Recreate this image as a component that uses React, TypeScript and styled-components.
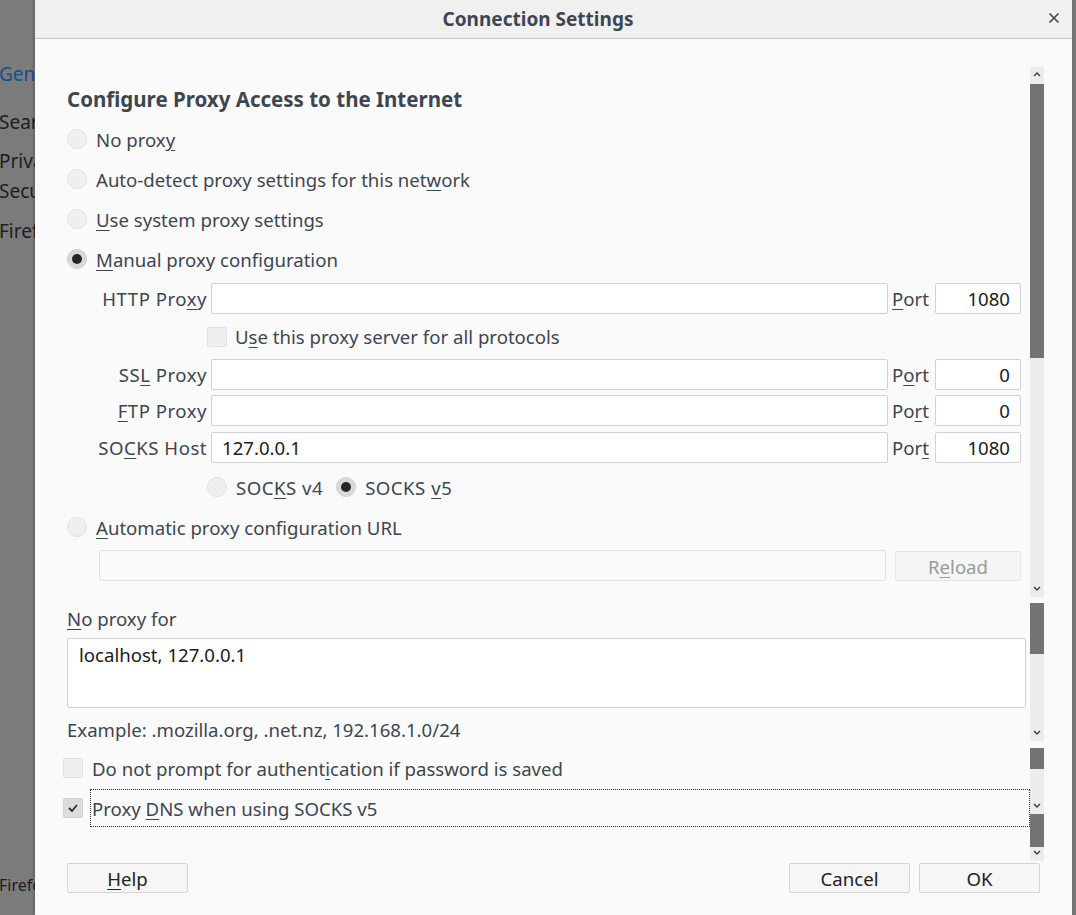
import React from "react";
import styled, { createGlobalStyle } from "styled-components";

const GlobalStyle = createGlobalStyle`
  html, body {
    margin: 0;
    padding: 0;
    overflow: hidden;
  }
  body {
    font-family: "Noto Sans", "Open Sans", sans-serif;
    font-size: 18.6px;
    color: #3d4650;
  }
  u {
    text-decoration-thickness: 1px;
    text-underline-offset: 3px;
  }
`;

const TEXT = "#3d4650";

type Segment = { kind: "track" | "thumb" | "gap"; height: number; arrow?: "up" | "down" };

const scrollSegments: Segment[] = [
  { kind: "track", height: 17, arrow: "up" },
  { kind: "thumb", height: 274 },
  { kind: "track", height: 239, arrow: "down" },
  { kind: "gap", height: 4 },
  { kind: "thumb", height: 51 },
  { kind: "track", height: 87, arrow: "down" },
  { kind: "gap", height: 7 },
  { kind: "thumb", height: 21 },
  { kind: "track", height: 45, arrow: "down" },
  { kind: "thumb", height: 33 },
  { kind: "track", height: 14, arrow: "down" },
];

const Chevron = ({ dir }: { dir: "up" | "down" }) => (
  <svg width="8" height="5" viewBox="0 0 8 5">
    <polyline
      points={dir === "up" ? "1,4 4,1 7,4" : "1,1 4,4 7,1"}
      fill="none"
      stroke="#3a3a3a"
      strokeWidth="1.4"
    />
  </svg>
);

const CloseIcon = () => (
  <svg width="12" height="12" viewBox="0 0 12 12">
    <path d="M1.5 1.5 L10.5 10.5 M10.5 1.5 L1.5 10.5" stroke="#3d4650" strokeWidth="1.6" />
  </svg>
);

const CheckIcon = () => (
  <svg width="12" height="10" viewBox="0 0 12 10">
    <polyline points="2,5 5,8 10,2" fill="none" stroke="#2a2a2a" strokeWidth="1.8" />
  </svg>
);

const Radio = ({ checked }: { checked?: boolean }) => (
  <RadioCircle $checked={checked}>{checked && <RadioDot />}</RadioCircle>
);

const Check = ({ checked }: { checked?: boolean }) => (
  <CheckBox $checked={checked}>{checked && <CheckIcon />}</CheckBox>
);

const ProxyRow = ({
  label,
  value,
  port,
  portLabel,
}: {
  label: React.ReactNode;
  value?: string;
  port: string;
  portLabel: React.ReactNode;
}) => (
  <GridRow>
    <FieldLabel>
      <span>{label}</span>
    </FieldLabel>
    <TextInput>{value}</TextInput>
    <PortLabel>
      <span>{portLabel}</span>
    </PortLabel>
    <PortInput>{port}</PortInput>
  </GridRow>
);

export default function App() {
  return (
    <Page>
      <GlobalStyle />
      <Backdrop>
        <NavItem $active $top={62}>General</NavItem>
        <NavItem $top={24}>Search</NavItem>
        <NavItem $top={15}>Privacy &amp;</NavItem>
        <NavItem $top={6}>Security</NavItem>
        <NavItem $top={16}>Firefox Account</NavItem>
        <NavFooter>Firefox Support</NavFooter>
      </Backdrop>

      <Dialog>
        <TitleBar>
          <Title>Connection Settings</Title>
          <CloseButton>
            <CloseIcon />
          </CloseButton>
        </TitleBar>

        <Body>
          <Content>
            <Heading>Configure Proxy Access to the Internet</Heading>

            <OptionRow $height={40}>
              <Radio />
              <span>No prox<u>y</u></span>
            </OptionRow>
            <OptionRow $height={40}>
              <Radio />
              <span>Auto-detect proxy settings for this net<u>w</u>ork</span>
            </OptionRow>
            <OptionRow $height={40}>
              <Radio />
              <span><u>U</u>se system proxy settings</span>
            </OptionRow>
            <OptionRow $height={40}>
              <Radio checked />
              <span><u>M</u>anual proxy configuration</span>
            </OptionRow>

            <ManualGrid>
              <ProxyRow
                label={<>HTTP Pro<u>x</u>y</>}
                portLabel={<><u>P</u>ort</>}
                port="1080"
              />
              <AllProtocolsRow>
                <Check />
                <span>U<u>s</u>e this proxy server for all protocols</span>
              </AllProtocolsRow>
              <ProxyRow
                label={<>SS<u>L</u> Proxy</>}
                portLabel={<>P<u>o</u>rt</>}
                port="0"
              />
              <Spacer $h={5} />
              <ProxyRow
                label={<><u>F</u>TP Proxy</>}
                portLabel={<>Po<u>r</u>t</>}
                port="0"
              />
              <Spacer $h={6} />
              <ProxyRow
                label={<>SO<u>C</u>KS Host</>}
                value="127.0.0.1"
                portLabel={<>Por<u>t</u></>}
                port="1080"
              />
              <SocksRow>
                <Radio />
                <SocksLabel>SOC<u>K</u>S v4</SocksLabel>
                <Radio checked />
                <SocksLabel>SOCKS <u>v</u>5</SocksLabel>
              </SocksRow>
            </ManualGrid>

            <OptionRow $height={32}>
              <Radio />
              <span><u>A</u>utomatic proxy configuration URL</span>
            </OptionRow>
            <UrlRow>
              <UrlInput />
              <ReloadButton>
                <span>R<u>e</u>load</span>
              </ReloadButton>
            </UrlRow>

            <SectionLabel>
              <u>N</u>o proxy for
            </SectionLabel>
            <TextArea>localhost, 127.0.0.1</TextArea>
            <Hint>Example: .mozilla.org, .net.nz, 192.168.1.0/24</Hint>

            <CheckRow $height={40} $top={6}>
              <Check />
              <CheckText>
                <span>Do not prompt for authent<u>i</u>cation if password is saved</span>
              </CheckText>
            </CheckRow>
            <CheckRow $height={38} $top={1}>
              <Check checked />
              <CheckText $focused>
                <span>Proxy <u>D</u>NS when using SOCKS v5</span>
              </CheckText>
            </CheckRow>
          </Content>

          <ScrollColumn>
            {scrollSegments.map((s, i) => (
              <ScrollPiece key={i} $kind={s.kind} $arrow={s.arrow} style={{ height: s.height }}>
                {s.arrow && <Chevron dir={s.arrow} />}
              </ScrollPiece>
            ))}
          </ScrollColumn>
        </Body>

        <Footer>
          <DialogButton>
            <span><u>H</u>elp</span>
          </DialogButton>
          <FooterRight>
            <DialogButton>Cancel</DialogButton>
            <DialogButton>OK</DialogButton>
          </FooterRight>
        </Footer>

        <Grip>
          <svg width="10" height="10" viewBox="0 0 10 10">
            <path d="M9 3 L3 9 M9 6 L6 9" stroke="#b8b8b8" strokeWidth="1" />
          </svg>
        </Grip>
      </Dialog>
      <RightEdge />
    </Page>
  );
}

const Page = styled.div`
  display: flex;
  width: 1076px;
  height: 915px;
  background: #7b7b7b;
`;

const Backdrop = styled.div`
  width: 35px;
  flex-shrink: 0;
  overflow: hidden;
  display: flex;
  flex-direction: column;
  white-space: nowrap;
  color: #1d1d1d;
  font-size: 19px;
  line-height: 24px;
`;

const NavItem = styled.div<{ $active?: boolean; $top: number }>`
  margin-top: ${(p) => p.$top}px;
  margin-left: -1px;
  color: ${(p) => (p.$active ? "#114f93" : "#1d1d1d")};
`;

const NavFooter = styled.div`
  margin-top: auto;
  margin-bottom: 18px;
  font-size: 16px;
  margin-left: -1px;
`;

const Dialog = styled.div`
  position: relative;
  flex: 1;
  display: flex;
  flex-direction: column;
  background: #fafafa;
  box-shadow: -1px 0 3px rgba(0, 0, 0, 0.25);
`;

const RightEdge = styled.div`
  width: 4px;
  flex-shrink: 0;
  background: #777;
`;

const TitleBar = styled.div`
  height: 39px;
  box-sizing: border-box;
  flex-shrink: 0;
  display: flex;
  align-items: center;
  justify-content: center;
  padding-right: 31px;
  background: #f0f0f0;
  border-bottom: 1px solid #c6c6c6;
  position: relative;
`;

const Title = styled.div`
  font-weight: bold;
  font-size: 19px;
  color: ${TEXT};
`;

const CloseButton = styled.div`
  position: absolute;
  right: 10px;
  top: 10px;
  width: 16px;
  height: 16px;
  display: flex;
  align-items: center;
  justify-content: center;
`;

const Body = styled.div`
  flex: 1;
  display: flex;
  min-height: 0;
  padding-right: 28px;
`;

const Content = styled.div`
  flex: 1;
  display: flex;
  flex-direction: column;
  padding: 45px 0 0 32px;
  min-width: 0;
`;

const Heading = styled.div`
  height: 30px;
  line-height: 30px;
  margin-bottom: 5px;
  font-size: 20.5px;
  font-weight: bold;
  color: ${TEXT};
`;

const OptionRow = styled.div<{ $height: number }>`
  height: ${(p) => p.$height}px;
  display: flex;
  align-items: center;
  gap: 9px;
  flex-shrink: 0;
  white-space: nowrap;
`;

const RadioCircle = styled.div<{ $checked?: boolean }>`
  width: 20px;
  height: 20px;
  box-sizing: border-box;
  border-radius: 50%;
  flex-shrink: 0;
  background: ${(p) => (p.$checked ? "#d9d9d9" : "#efefef")};
  border: 1px solid ${(p) => (p.$checked ? "#d0d0d0" : "#e0e0e0")};
  display: flex;
  align-items: center;
  justify-content: center;
`;

const RadioDot = styled.div`
  width: 10px;
  height: 10px;
  border-radius: 50%;
  background: #262626;
`;

const CheckBox = styled.div<{ $checked?: boolean }>`
  width: 20px;
  height: 20px;
  box-sizing: border-box;
  border-radius: 2px;
  flex-shrink: 0;
  background: ${(p) => (p.$checked ? "#dcdcdc" : "#efefef")};
  border: 1px solid ${(p) => (p.$checked ? "#d2d2d2" : "#e0e0e0")};
  display: flex;
  align-items: center;
  justify-content: center;
`;

const ManualGrid = styled.div`
  margin-top: 4px;
  margin-left: 28px;
  display: grid;
  grid-template-columns: 112px 677px 39px 86px;
  column-gap: 4px;
`;

const GridRow = styled.div`
  display: contents;
`;

const FieldLabel = styled.div`
  height: 31px;
  display: flex;
  align-items: center;
  justify-content: flex-end;
  white-space: nowrap;
  letter-spacing: 0.5px;
`;

const PortLabel = styled.div`
  height: 31px;
  display: flex;
  align-items: center;
`;

const InputBase = styled.div`
  height: 31px;
  box-sizing: border-box;
  border: 1px solid #d0d0d6;
  border-radius: 2px;
  background: #fff;
  display: flex;
  align-items: center;
  padding: 0 10px;
  color: #1a1a1a;
`;

const TextInput = styled(InputBase)``;

const PortInput = styled(InputBase)`
  justify-content: flex-end;
`;

const AllProtocolsRow = styled.div`
  grid-column: 2 / 5;
  margin-left: -4px;
  height: 45px;
  display: flex;
  align-items: center;
  gap: 8px;
`;

const Spacer = styled.div<{ $h: number }>`
  grid-column: 1 / 5;
  height: ${(p) => p.$h}px;
`;

const SocksRow = styled.div`
  grid-column: 2 / 5;
  margin-left: -4px;
  height: 48px;
  display: flex;
  align-items: center;
  gap: 9px;
`;

const SocksLabel = styled.span`
  margin-right: 4px;
  letter-spacing: 0.5px;
`;

const UrlRow = styled.div`
  margin-top: 7px;
  margin-left: 32px;
  display: flex;
  gap: 9px;
  width: 922px;
`;

const UrlInput = styled.div`
  flex: 1;
  height: 31px;
  box-sizing: border-box;
  border: 1px solid #e3e3e6;
  border-radius: 2px;
  background: #fafafa;
`;

const ReloadButton = styled.div`
  width: 126px;
  height: 30px;
  margin-top: 1px;
  box-sizing: border-box;
  border: 1px solid #e6e6e6;
  border-radius: 2px;
  background: #f5f5f5;
  color: #9a9a9a;
  display: flex;
  align-items: center;
  justify-content: center;
`;

const SectionLabel = styled.div`
  margin-top: 26px;
  height: 24px;
  line-height: 24px;
`;

const TextArea = styled.div`
  margin-top: 7px;
  width: 959px;
  height: 70px;
  box-sizing: border-box;
  border: 1px solid #d0d0d6;
  border-radius: 2px;
  background: #fff;
  padding: 4px 11px;
  color: #1a1a1a;
  line-height: 24px;
`;

const Hint = styled.div`
  margin-top: 10px;
  height: 24px;
  line-height: 24px;
`;

const CheckRow = styled.div<{ $height: number; $top: number }>`
  margin-top: ${(p) => p.$top}px;
  margin-left: -4px;
  height: ${(p) => p.$height}px;
  display: flex;
  align-items: center;
  gap: 7px;
  flex-shrink: 0;
`;

const CheckText = styled.div<{ $focused?: boolean }>`
  flex: ${(p) => (p.$focused ? 1 : "none")};
  height: 100%;
  box-sizing: border-box;
  display: flex;
  align-items: center;
  padding-left: 1px;
  border: 1px dotted ${(p) => (p.$focused ? "#333" : "transparent")};
`;

const ScrollColumn = styled.div`
  width: 14px;
  flex-shrink: 0;
  margin-top: 28px;
  display: flex;
  flex-direction: column;
`;

const ScrollPiece = styled.div<{ $kind: Segment["kind"]; $arrow?: "up" | "down" }>`
  flex-shrink: 0;
  background: ${(p) => (p.$kind === "thumb" ? "#737373" : p.$kind === "track" ? "#ececec" : "transparent")};
  display: flex;
  justify-content: center;
  align-items: ${(p) => (p.$arrow === "up" ? "flex-start" : "flex-end")};
  padding: ${(p) => (p.$arrow === "up" ? "5px 0 0" : "0 0 6px")};
  box-sizing: border-box;
`;

const Footer = styled.div`
  height: 57px;
  box-sizing: border-box;
  flex-shrink: 0;
  display: flex;
  justify-content: space-between;
  align-items: flex-start;
  padding: 5px 32px 0 32px;
`;

const FooterRight = styled.div`
  display: flex;
  gap: 9px;
`;

const DialogButton = styled.div`
  width: 121px;
  height: 30px;
  box-sizing: border-box;
  border: 1px solid #d4d4d8;
  border-radius: 2px;
  background: #f6f6f6;
  color: #222;
  display: flex;
  align-items: center;
  justify-content: center;
`;

const Grip = styled.div`
  position: absolute;
  right: 0;
  bottom: 0;
  width: 10px;
  height: 10px;
`;
